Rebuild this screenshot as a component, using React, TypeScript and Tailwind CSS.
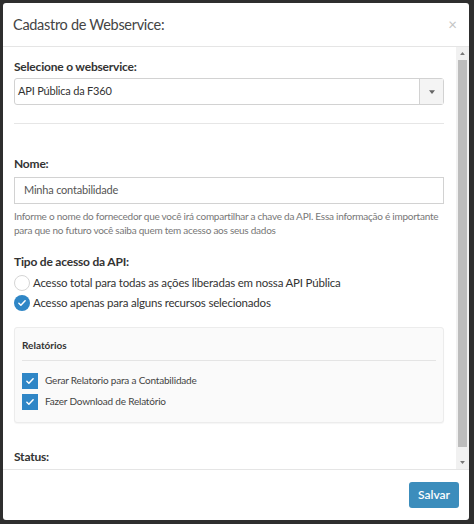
import React from "react";

const font = { fontFamily: '"Lato", "Noto Sans", sans-serif' };

function Check({ round = false }: { round?: boolean }) {
  return (
    <span
      className={`flex h-[16px] w-[16px] shrink-0 items-center justify-center bg-[#2f86c6] ${
        round ? "rounded-full" : ""
      }`}
    >
      <svg viewBox="0 0 16 16" className="h-[10px] w-[10px]" fill="none" stroke="white" strokeWidth={2.4}>
        <path d="M3 8.5l3.2 3L13 4.5" strokeLinecap="round" strokeLinejoin="round" />
      </svg>
    </span>
  );
}

export default function App() {
  return (
    <div className="h-[524px] w-[474px] overflow-hidden bg-[#2e2e2e] pl-[3px] pt-[3px]" style={font}>
      <div className="flex h-[517px] w-[466px] flex-col overflow-hidden rounded-[3px] bg-white text-[#333]">
        {/* Header */}
        <div className="flex h-[44px] shrink-0 items-center justify-between border-b border-[#e5e5e5] pl-[10px] pr-[12px]">
          <h4 className="text-[14.5px] tracking-[-0.3px] text-[#444]">Cadastro de Webservice:</h4>
          <span className="text-[15px] leading-none text-[#c4c4c4]">×</span>
        </div>

        {/* Body */}
        <div className="flex h-[422px] shrink-0">
          <div className="flex-1 overflow-hidden pl-[11px] pr-[12px] pt-[11px]">
            <label className="block text-[12px] font-bold leading-[18px] tracking-[-0.2px]">Selecione o webservice:</label>
            <div className="mt-[2px] flex h-[27px] rounded-[3px] border border-[#d2d2d2]">
              <div className="flex flex-1 items-center pl-[3px] text-[11px] tracking-[-0.2px]">API Pública da F360</div>
              <div className="flex w-[24px] items-center justify-center border-l border-[#d2d2d2] bg-[#f4f4f4]">
                <svg viewBox="0 0 8 5" className="h-[4px] w-[6px]" fill="#666">
                  <path d="M0 0h8L4 5z" />
                </svg>
              </div>
            </div>
            <div className="mt-[18px] border-t border-[#e6e6e6]" />

            <label className="mt-[31px] block text-[12px] font-bold leading-[18px] tracking-[-0.2px]">Nome:</label>
            <div className="mt-[4px] flex h-[27px] items-center border border-[#d2d2d2] pl-[9px] text-[11px] tracking-[-0.2px] text-[#555]">
              Minha contabilidade
            </div>
            <p className="mt-[5px] text-[10px] leading-[14px] tracking-[-0.25px] text-[#777]">
              Informe o nome do fornecedor que você irá compartilhar a chave da API. Essa informação é importante
              para que no futuro você saiba quem tem acesso aos seus dados
            </p>

            <label className="mt-[16px] block text-[12px] font-bold leading-[18px] tracking-[-0.2px]">
              Tipo de acesso da API:
            </label>
            <div className="mt-[2px] flex h-[20px] items-center gap-[3px] text-[11.5px] tracking-[-0.2px]">
              <span className="h-[16px] w-[16px] shrink-0 rounded-full border border-[#d5d5d5] bg-white" />
              <span>Acesso total para todas as ações liberadas em nossa API Pública</span>
            </div>
            <div className="flex h-[20px] items-center gap-[3px] text-[11.5px] tracking-[-0.2px]">
              <Check round />
              <span>Acesso apenas para alguns recursos selecionados</span>
            </div>

            <div className="mt-[14px] rounded-[3px] border border-[#ececec] bg-[#fafafa] px-[7px] pb-[10px] pt-[10px] shadow-[0_1px_1px_rgba(0,0,0,0.04)]">
              <div className="border-b border-[#e4e4e4] pb-[8px] text-[10px] font-bold leading-[14px]">Relatórios</div>
              <div className="mt-[9px] flex h-[21px] items-center gap-[7px] text-[10px] tracking-[-0.2px] text-[#444]">
                <Check />
                <span>Gerar Relatorio para a Contabilidade</span>
              </div>
              <div className="flex h-[21px] items-center gap-[7px] text-[10px] tracking-[-0.2px] text-[#444]">
                <Check />
                <span>Fazer Download de Relatório</span>
              </div>
            </div>

            <label className="mt-[25px] block text-[12px] font-bold leading-[18px] tracking-[-0.2px]">Status:</label>
          </div>

          {/* Scrollbar */}
          <div className="flex w-[13px] shrink-0 flex-col items-center bg-[#f1f1f1]">
            <div className="flex h-[13px] items-center justify-center">
              <svg viewBox="0 0 8 5" className="h-[3px] w-[5px]" fill="#777">
                <path d="M4 0l4 5H0z" />
              </svg>
            </div>
            <div className="h-[387px] w-[9px] bg-[#bdbdbd]" />
            <div className="flex-1" />
            <div className="flex h-[13px] items-center justify-center">
              <svg viewBox="0 0 8 5" className="h-[3px] w-[5px]" fill="#777">
                <path d="M0 0h8L4 5z" />
              </svg>
            </div>
          </div>
        </div>

        {/* Footer */}
        <div className="flex flex-1 items-center justify-end border-t border-[#e5e5e5] pr-[10px]">
          <button className="h-[26px] w-[50px] rounded-[3px] bg-[#3c8dbc] text-[12px] font-semibold text-white">
            Salvar
          </button>
        </div>
      </div>
    </div>
  );
}
